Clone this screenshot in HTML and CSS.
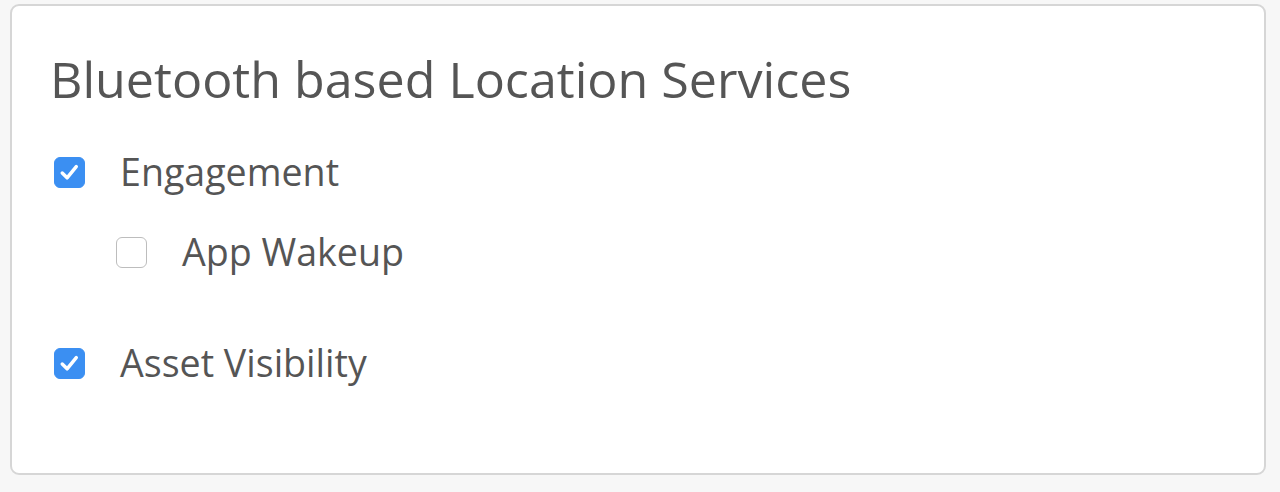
FILE: index.html
```html
<!DOCTYPE html>
<html>
<head>
<meta charset="utf-8">
<link rel="stylesheet" href="styles.css">
</head>
<body>
<div class="card">
  <h1 class="title">Bluetooth based Location Services</h1>
  <div class="option">
    <span class="box checked"><svg viewBox="0 0 30 30" width="30" height="30"><path d="M7.5 15.5 L12.5 20.5 L22 9" fill="none" stroke="#fff" stroke-width="3.6" stroke-linecap="round" stroke-linejoin="round"/></svg></span>
    <span class="label">Engagement</span>
  </div>
  <div class="option sub">
    <span class="box"></span>
    <span class="label">App Wakeup</span>
  </div>
  <div class="option last">
    <span class="box checked"><svg viewBox="0 0 30 30" width="30" height="30"><path d="M7.5 15.5 L12.5 20.5 L22 9" fill="none" stroke="#fff" stroke-width="3.6" stroke-linecap="round" stroke-linejoin="round"/></svg></span>
    <span class="label">Asset Visibility</span>
  </div>
</div>
</body>
</html>
```
FILE: styles.css
```css
html, body {
  margin: 0;
  padding: 0;
  background: #f7f7f7;
}
body {
  padding: 4px 14px 0 10px;
  font-family: "Open Sans", "Liberation Sans", sans-serif;
  color: #555;
}
.card {
  box-sizing: border-box;
  height: 471px;
  background: #fff;
  border: 2px solid #d6d6d6;
  border-radius: 9px;
  padding: 44px 0 0 42px;
}
.title {
  margin: 0 0 40px -4px;
  font-size: 50.2px;
  font-weight: 400;
  line-height: 57px;
  color: #555;
}
.option {
  display: flex;
  align-items: center;
  height: 50px;
  margin-bottom: 30px;
}
.option.sub {
  margin-left: 62px;
  margin-bottom: 61px;
}
.box {
  box-sizing: border-box;
  width: 31px;
  height: 31px;
  border-radius: 6px;
  border: 1.5px solid #bdbdbd;
  background: #fff;
  margin-right: 35px;
  display: flex;
  flex: none;
}
.box.checked {
  background: #3b8ff2;
  border-color: #3b8ff2;
}
.box svg {
  width: 100%;
  height: 100%;
}
.label {
  font-size: 37.6px;
  line-height: 50px;
  color: #555;
}
```
